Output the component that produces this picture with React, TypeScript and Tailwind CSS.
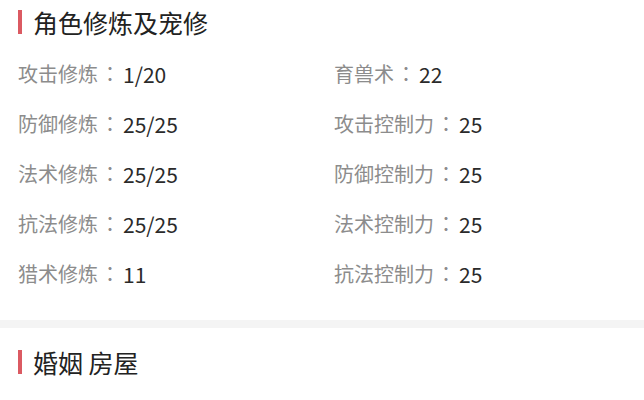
const rows: [string, string, string, string][] = [
  ["攻击修炼", "1/20", "育兽术", "22"],
  ["防御修炼", "25/25", "攻击控制力", "25"],
  ["法术修炼", "25/25", "防御控制力", "25"],
  ["抗法修炼", "25/25", "法术控制力", "25"],
  ["猎术修炼", "11", "抗法控制力", "25"],
];

const Title = ({ text }: { text: string }) => (
  <div className="flex items-center h-[44px] pl-[18px]">
    <span className="w-[4px] h-[24px] bg-[#db5a62] mr-[11px]" />
    <span className="text-[25px] text-[#222] leading-none">{text}</span>
  </div>
);

const Item = ({ label, value }: { label: string; value: string }) => (
  <div className="flex items-center text-[20px] leading-none">
    <span className="text-[#8c8c8c]">{label}</span>
    <span className="text-[#8c8c8c] ml-[2px] font-['Noto_Sans_CJK_TC',sans-serif]">：</span>
    <span className="text-[#2a2a2a] text-[21px] ml-[3px]">{value}</span>
  </div>
);

export default function App() {
  return (
    <div className="w-[644px] h-[400px] bg-white overflow-hidden font-['Noto_Sans_CJK_SC',sans-serif]">
      <Title text="角色修炼及宠修" />
      <div className="pt-[5px] pb-[21px]">
        {rows.map((r) => (
          <div key={r[0]} className="grid grid-cols-[316px_1fr] h-[50px] items-center pl-[18px]">
            <Item label={r[0]} value={r[1]} />
            <Item label={r[2]} value={r[3]} />
          </div>
        ))}
      </div>
      <div className="h-[8px] bg-[#f4f4f4]" />
      <div className="pt-[12px]">
        <Title text="婚姻 房屋" />
      </div>
    </div>
  );
}
